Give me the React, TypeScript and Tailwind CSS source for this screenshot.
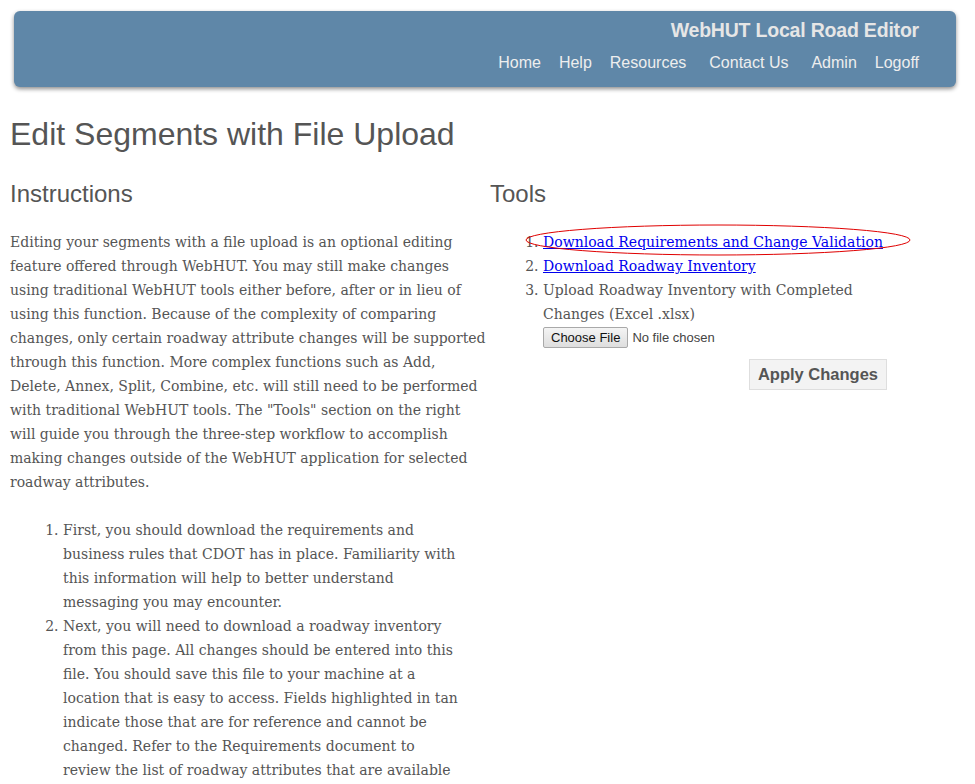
import React from "react";

const navItems = ["Home", "Help", "Resources", "Contact Us", "Admin", "Logoff"];

const serif = "font-['DejaVu_Serif',Georgia,serif]";

const introLines = [
  "Editing your segments with a file upload is an optional editing",
  "feature offered through WebHUT. You may still make changes",
  "using traditional WebHUT tools either before, after or in lieu of",
  "using this function. Because of the complexity of comparing",
  "changes, only certain roadway attribute changes will be supported",
  "through this function. More complex functions such as Add,",
  "Delete, Annex, Split, Combine, etc. will still need to be performed",
  'with traditional WebHUT tools. The "Tools" section on the right',
  "will guide you through the three-step workflow to accomplish",
  "making changes outside of the WebHUT application for selected",
  "roadway attributes.",
];

const steps = [
  [
    "First, you should download the requirements and",
    "business rules that CDOT has in place. Familiarity with",
    "this information will help to better understand",
    "messaging you may encounter.",
  ],
  [
    "Next, you will need to download a roadway inventory",
    "from this page. All changes should be entered into this",
    "file. You should save this file to your machine at a",
    "location that is easy to access. Fields highlighted in tan",
    "indicate those that are for reference and cannot be",
    "changed. Refer to the Requirements document to",
    "review the list of roadway attributes that are available",
  ],
];

const Lines = ({ lines }: { lines: string[] }) => (
  <>
    {lines.map((line, idx) => (
      <React.Fragment key={idx}>
        {line}
        {idx < lines.length - 1 && <br />}
      </React.Fragment>
    ))}
  </>
);

export default function App() {
  return (
    <div className="min-h-screen bg-white text-[#555] font-['Liberation_Sans',Arial,sans-serif]">
      <div className="pt-[11px] px-[14px] pr-[19px]">
        <header className="h-[76px] rounded-md bg-[#5f87a8] shadow-[0_2px_4px_rgba(0,0,0,0.45)] flex flex-col items-end pr-[37px]">
          <div className="mt-[7px] text-[19.5px] leading-[24px] font-bold text-[#e6e6e6] tracking-[-0.2px]">
            WebHUT Local Road Editor
          </div>
          <nav className="mt-[11px] flex text-[16px] leading-[20px] text-[#eeeeee] gap-[18px]">
            {navItems.map((item, idx) => (
              <a key={idx} className={idx === 3 || idx === 4 ? "ml-[5px] cursor-pointer" : "cursor-pointer"}>
                {item}
              </a>
            ))}
          </nav>
        </header>
      </div>

      <h1 className="mt-[27px] ml-[10px] text-[32px] leading-[40px] text-[#555]">
        Edit Segments with File Upload
      </h1>

      <div className="flex mt-[25px] pl-[10px]">
        <div className="w-[470px] pr-[5px]">
          <h2 className="text-[24px] leading-[30px]">Instructions</h2>
          <p className={`${serif} mt-[21px] text-[14px] leading-[24px] whitespace-nowrap`}>
            <Lines lines={introLines} />
          </p>
          <ol className={`${serif} mt-[24px] text-[14px] leading-[24px] list-decimal pl-[53px] whitespace-nowrap`}>
            {steps.map((lines, idx) => (
              <li key={idx}>
                <Lines lines={lines} />
              </li>
            ))}
          </ol>
        </div>

        <div className="ml-[10px] w-[420px]">
          <h2 className="text-[24px] leading-[30px]">Tools</h2>
          <div className="relative mt-[21px]">
            <ol className={`${serif} text-[14px] leading-[24px] list-decimal pl-[53px]`}>
              <li>
                <a className="text-[#0000ee] underline cursor-pointer">
                  Download Requirements and Change Validation
                </a>
              </li>
              <li>
                <a className="text-[#0000ee] underline cursor-pointer">Download Roadway Inventory</a>
              </li>
              <li className="whitespace-nowrap">
                Upload Roadway Inventory with Completed
                <br />
                Changes (Excel .xlsx)
                <div className="flex items-center mt-[1px] mb-[2px] font-['Liberation_Sans',Arial,sans-serif] text-[13px] leading-[16px]">
                  <button className="px-[7px] h-[21px] border border-[#a9a9a9] rounded-[2px] bg-gradient-to-b from-[#f4f4f4] to-[#dedede] text-[#111]">
                    Choose File
                  </button>
                  <span className="ml-[4px] text-[#444]">No file chosen</span>
                </div>
              </li>
            </ol>
            <div className="flex justify-end pr-[23px] mt-[11px]">
              <button className="h-[31px] px-[8px] bg-[#f3f3f3] border border-[#dedede] font-['Liberation_Sans',Arial,sans-serif] font-bold text-[16.5px] text-[#555]">
                Apply Changes
              </button>
            </div>
            <svg
              className="absolute left-[35px] top-[-6px] pointer-events-none"
              width="386"
              height="32"
              viewBox="0 0 386 32"
            >
              <ellipse cx="193" cy="16" rx="192" ry="15" fill="none" stroke="#e00000" strokeWidth="1" />
            </svg>
          </div>
        </div>
      </div>
    </div>
  );
}
